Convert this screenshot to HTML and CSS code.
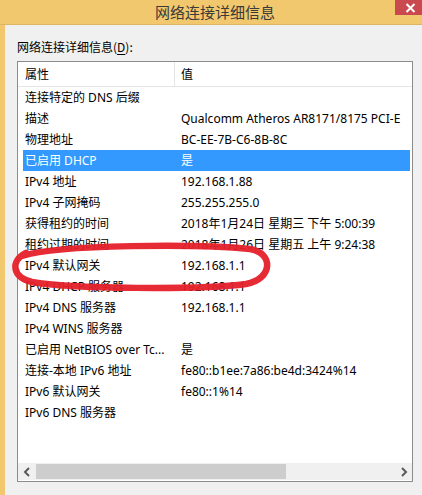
FILE: index.html
```html
<!DOCTYPE html>
<html lang="zh-CN">
<head>
<meta charset="utf-8">
<title>网络连接详细信息</title>
<link rel="stylesheet" href="styles.css">
</head>
<body>
<div class="window">
  <div class="titlebar">
    <div class="title">网络连接详细信息</div>
    <div class="close">
      <svg width="11" height="10" viewBox="0 0 11 10"><path d="M1.5 1 L9.5 9 M9.5 1 L1.5 9" stroke="#fff" stroke-width="2" fill="none"/></svg>
    </div>
  </div>
  <div class="body">
    <div class="label">网络连接详细信息(<u>D</u>):</div>
    <div class="listview">
      <div class="header">
        <div class="hcol hcol1">属性</div>
        <div class="hcol hcol2">值</div>
      </div>
      <div class="rows">
        <div class="row"><span class="c1">连接特定的 DNS 后缀</span><span class="c2"></span></div>
        <div class="row"><span class="c1">描述</span><span class="c2">Qualcomm Atheros AR8171/8175 PCI-E</span></div>
        <div class="row"><span class="c1">物理地址</span><span class="c2">BC-EE-7B-C6-8B-8C</span></div>
        <div class="row selected"><span class="c1">已启用 DHCP</span><span class="c2">是</span></div>
        <div class="row"><span class="c1">IPv4 地址</span><span class="c2">192.168.1.88</span></div>
        <div class="row"><span class="c1">IPv4 子网掩码</span><span class="c2">255.255.255.0</span></div>
        <div class="row"><span class="c1">获得租约的时间</span><span class="c2">2018年1月24日 星期三 下午 5:00:39</span></div>
        <div class="row"><span class="c1">租约过期的时间</span><span class="c2">2018年1月26日 星期五 上午 9:24:38</span></div>
        <div class="row"><span class="c1">IPv4 默认网关</span><span class="c2">192.168.1.1</span></div>
        <div class="row"><span class="c1">IPv4 DHCP 服务器</span><span class="c2">192.168.1.1</span></div>
        <div class="row"><span class="c1">IPv4 DNS 服务器</span><span class="c2">192.168.1.1</span></div>
        <div class="row"><span class="c1">IPv4 WINS 服务器</span><span class="c2"></span></div>
        <div class="row"><span class="c1">已启用 NetBIOS over Tc...</span><span class="c2">是</span></div>
        <div class="row"><span class="c1">连接-本地 IPv6 地址</span><span class="c2">fe80::b1ee:7a86:be4d:3424%14</span></div>
        <div class="row"><span class="c1">IPv6 默认网关</span><span class="c2">fe80::1%14</span></div>
        <div class="row"><span class="c1">IPv6 DNS 服务器</span><span class="c2"></span></div>
      </div>
      <div class="hscroll">
        <div class="arrow">
          <svg width="8" height="10" viewBox="0 0 8 10"><path d="M6 1 L2 5 L6 9" stroke="#5a5a5a" stroke-width="2" fill="none"/></svg>
        </div>
        <div class="track"><div class="thumb"></div></div>
        <div class="arrow">
          <svg width="8" height="10" viewBox="0 0 8 10"><path d="M2 1 L6 5 L2 9" stroke="#5a5a5a" stroke-width="2" fill="none"/></svg>
        </div>
      </div>
    </div>
  </div>
</div>
<svg class="annotation" width="422" height="495" viewBox="0 0 422 495">
  <path d="M22 256 C60 244 200 244 250 249 C274 253 273 279 246 284 C200 290 70 289 32 282 C12 277 10 261 26 253" stroke="#e5202a" stroke-width="6.5" fill="none" stroke-linecap="round" stroke-linejoin="round" opacity="0.95"/>
</svg>
</body>
</html>
```

FILE: styles.css
```css
html, body {
  margin: 0;
  padding: 0;
}
body {
  width: 422px;
  height: 495px;
  overflow: hidden;
  background: #f0f0f0;
  font-family: "Noto Sans", "Noto Sans CJK SC", sans-serif;
  font-size: 12px;
  color: #000;
  position: relative;
}
.window {
  display: flex;
  flex-direction: column;
  height: 495px;
}
.titlebar {
  height: 24px;
  background: #f1c86d;
  border-bottom: 1px solid #dcb665;
  display: flex;
  justify-content: center;
  align-items: center;
  position: relative;
  flex: none;
}
.title {
  font-family: "Noto Sans CJK SC", sans-serif;
  font-size: 15px;
  color: #3a3a3a;
  line-height: 24px;
  padding-left: 8px;
}
.close {
  position: absolute;
  top: 0;
  right: 0;
  width: 27px;
  height: 15px;
  background: #c9494f;
  display: flex;
  align-items: center;
  justify-content: center;
  padding-left: 4px;
  box-sizing: border-box;
}
.close svg {
  display: block;
}
.body {
  flex: 1;
  border-left: 5px solid #f1c86d;
  padding: 13px 0 0 12px;
  background: #f0f0f0;
}
.label {
  font-family: "Noto Sans CJK SC", sans-serif;
  font-size: 12px;
  line-height: 18px;
  color: #000;
  margin-bottom: 5px;
}
.label u {
  text-decoration: underline;
  text-underline-offset: 2px;
}
.listview {
  width: 394px;
  height: 419px;
  border: 1px solid #8c8c8c;
  background: #fff;
  overflow: hidden;
}
.header {
  display: flex;
  height: 24px;
  border-bottom: 1px solid #e5e5e5;
}
.hcol {
  line-height: 24px;
  font-family: "Noto Sans CJK SC", sans-serif;
}
.hcol1 {
  width: 149px;
  padding-left: 7px;
  border-right: 1px solid #e5e5e5;
}
.hcol2 {
  padding-left: 6px;
}
.rows {
  height: 376px;
  padding-left: 5px;
  padding-right: 2px;
  overflow: hidden;
}
.row {
  display: flex;
  height: 21px;
  line-height: 21px;
  white-space: nowrap;
  overflow: hidden;
}
.row.selected {
  background: #3399ff;
  color: #fff;
}
.c1 {
  width: 156px;
  padding-left: 2px;
  flex: none;
  overflow: hidden;
}
.c2 {
  flex: none;
}
.hscroll {
  height: 17px;
  display: flex;
  background: #f0f0f0;
}
.arrow {
  width: 17px;
  height: 17px;
  display: flex;
  align-items: center;
  justify-content: center;
  flex: none;
}
.track {
  flex: 1;
  height: 17px;
  display: flex;
  align-items: center;
}
.thumb {
  width: 250px;
  height: 15px;
  margin-left: 1px;
  background: #cdcdcd;
}
.annotation {
  position: absolute;
  top: 0;
  left: 0;
  pointer-events: none;
}
```
